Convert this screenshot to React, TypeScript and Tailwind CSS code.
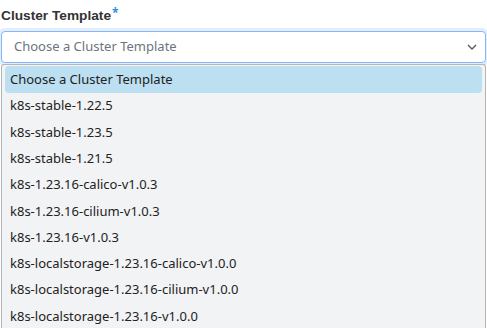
const options = [
  "Choose a Cluster Template",
  "k8s-stable-1.22.5",
  "k8s-stable-1.23.5",
  "k8s-stable-1.21.5",
  "k8s-1.23.16-calico-v1.0.3",
  "k8s-1.23.16-cilium-v1.0.3",
  "k8s-1.23.16-v1.0.3",
  "k8s-localstorage-1.23.16-calico-v1.0.0",
  "k8s-localstorage-1.23.16-cilium-v1.0.0",
  "k8s-localstorage-1.23.16-v1.0.0",
];

const App = () => {
  return (
    <div className="w-[487px] h-[328px] overflow-hidden bg-white font-['Noto_Sans',sans-serif] text-[#212529]">
      <div className="pt-[8px] pl-[1px] flex items-start gap-[1px]">
        <span className="text-[13.7px] font-bold leading-[16px] text-[#333] font-['Liberation_Sans',sans-serif]">
          Cluster Template
        </span>
        <span className="text-[12px] leading-[10px] text-[#2f8fdc] font-bold">*</span>
      </div>

      <div className="mt-[7px] mx-[1px] h-[32px] rounded-[4px] border border-[#86b7fe] shadow-[0_0_0_3px_rgba(13,110,253,0.12)] bg-white flex items-center justify-between pl-[12px] pr-[8px]">
        <span className="text-[13px] text-[#6c757d]">Choose a Cluster Template</span>
        <svg width="10" height="7" viewBox="0 0 10 7" fill="none" stroke="#555" strokeWidth="1.3">
          <path d="M1 1l4 4 4-4" />
        </svg>
      </div>

      <div className="mx-[1px] mt-[1px] h-[300px] bg-[#f2f3f5] border border-[#b5b5b5] border-b-0 rounded-t-[3px] px-[3px] pt-[1px]">
        <ul className="flex flex-col">
          {options.map((o, i) => (
            <li
              key={o}
              className={
                i === 0
                  ? "h-[27px] flex items-center px-[5px] rounded-[4px] bg-[#bcdff1] text-[13px] text-[#222]"
                  : "h-[26.3px] flex items-center px-[5px] text-[13px] text-[#222]"
              }
            >
              {o}
            </li>
          ))}
        </ul>
      </div>
    </div>
  );
};

export default App;
